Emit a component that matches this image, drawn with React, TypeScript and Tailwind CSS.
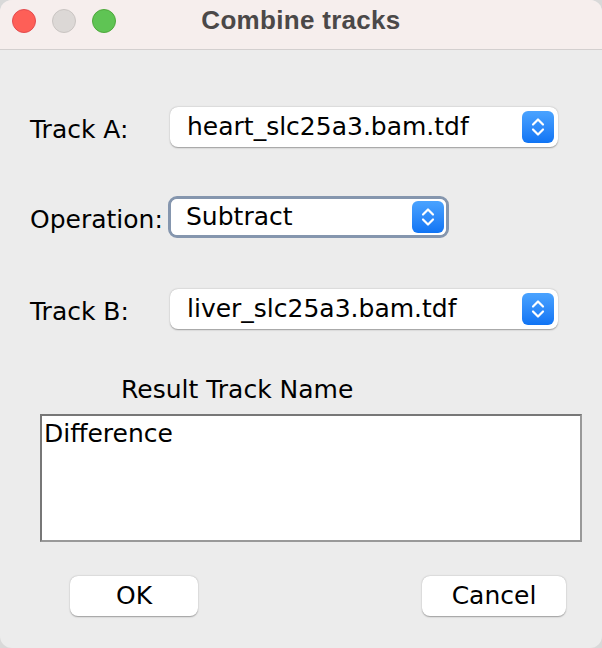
import React from "react";

const FONT = { fontFamily: '"DejaVu Sans", "Liberation Sans", sans-serif' };

function Stepper() {
  return (
    <div className="flex h-[32px] w-[32px] items-center justify-center rounded-[6px] bg-gradient-to-b from-[#4aa3ff] to-[#0f74f4]">
      <svg width="16" height="22" viewBox="0 0 16 22" fill="none">
        <path d="M3 8.5 L8 3.5 L13 8.5" stroke="white" strokeWidth="2.2" strokeLinecap="round" strokeLinejoin="round" />
        <path d="M3 13.5 L8 18.5 L13 13.5" stroke="white" strokeWidth="2.2" strokeLinecap="round" strokeLinejoin="round" />
      </svg>
    </div>
  );
}

function Combo({ value, width, focused }: { value: string; width: string; focused?: boolean }) {
  if (focused) {
    return (
      <div className={`${width} rounded-[9px] border-[3px] border-[#8596ae]`}>
        <div className="flex h-[36px] items-center justify-between rounded-[6px] bg-white pl-[15px] pr-[2px]">
          <span className="text-[25px] leading-[30px] text-black">{value}</span>
          <Stepper />
        </div>
      </div>
    );
  }
  return (
    <div
      className={`${width} flex h-[40px] items-center justify-between rounded-[8px] bg-white pl-[17px] pr-[4px] shadow-[0_0.5px_1.5px_rgba(0,0,0,0.35)]`}
    >
      <span className="text-[25px] leading-[30px] text-black">{value}</span>
      <Stepper />
    </div>
  );
}

export default function App() {
  return (
    <div className="h-[648px] w-[602px] bg-[#d9d9d9]" style={FONT}>
      <div className="flex h-[648px] w-[602px] flex-col overflow-hidden rounded-[12px] bg-[#ececec]">
        <div className="relative flex h-[50px] shrink-0 justify-center border-b border-[#d3cfcf] bg-[#f6eeed] pt-[5px]">
          <div className="absolute left-[12px] top-[9px] flex gap-[16px]">
            <div className="h-[24px] w-[24px] rounded-full border border-[#e24b4f] bg-[#fe5f57]" />
            <div className="h-[24px] w-[24px] rounded-full border border-[#c9c4c2] bg-[#dcd8d6]" />
            <div className="h-[24px] w-[24px] rounded-full border border-[#4ea83c] bg-[#5fc454]" />
          </div>
          <span
            className="text-[26px] font-bold leading-[30px] tracking-[0.3px] text-[#4b4848]"
            style={{ fontFamily: '"Liberation Sans", Arial, sans-serif' }}
          >
            Combine tracks
          </span>
        </div>

        <div className="flex flex-col pl-[30px]">
          <div className="mt-[57px] flex items-center">
            <span className="w-[140px] pt-[5px] text-[25px] leading-[30px] text-black">Track A:</span>
            <Combo value="heart_slc25a3.bam.tdf" width="w-[388px]" />
          </div>

          <div className="mt-[49px] flex items-center">
            <span className="w-[138px] pt-[5px] text-[25px] leading-[30px] text-black">Operation:</span>
            <Combo value="Subtract" width="w-[281px]" focused />
          </div>

          <div className="mt-[51px] flex items-center">
            <span className="w-[140px] pt-[5px] text-[25px] leading-[30px] text-black">Track B:</span>
            <Combo value="liver_slc25a3.bam.tdf" width="w-[388px]" />
          </div>
        </div>

        <div className="mt-[46px] pl-[121px] text-[25px] leading-[30px] text-black">Result Track Name</div>

        <div className="ml-[40px] mt-[9px] h-[128px] w-[542px] border-[2px] border-b-[#999] border-l-[#777] border-r-[#999] border-t-[#777] bg-white px-[2px] pt-[3px] text-[25px] leading-[30px] text-black">
          Difference
        </div>

        <div className="mt-[34px] flex justify-between pl-[70px] pr-[36px]">
          <button className="h-[40px] w-[128px] rounded-[8px] bg-white text-[25px] leading-[30px] text-black shadow-[0_0.5px_1.5px_rgba(0,0,0,0.35)]">
            OK
          </button>
          <button className="h-[40px] w-[144px] rounded-[8px] bg-white text-[25px] leading-[30px] text-black shadow-[0_0.5px_1.5px_rgba(0,0,0,0.35)]">
            Cancel
          </button>
        </div>
      </div>
    </div>
  );
}
